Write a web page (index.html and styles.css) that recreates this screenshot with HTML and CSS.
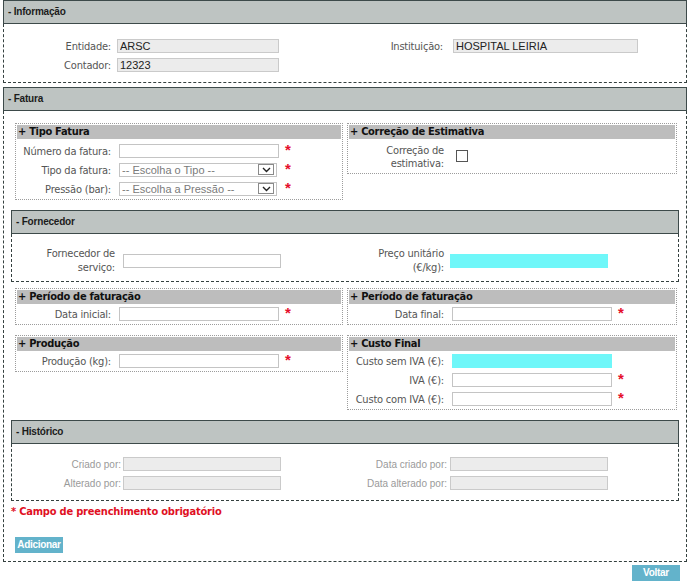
FILE: index.html
```
<!DOCTYPE html>
<html lang="pt">
<head>
<meta charset="utf-8">
<title>Fatura</title>
<link rel="stylesheet" href="styles.css">
</head>
<body>
<div class="page">
  <section class="panel">
    <h2 class="panel-head">- Informação</h2>
    <div class="panel-body info-body">
      <div class="cols">
        <div class="col info-l">
          <div class="row"><label class="lbl">Entidade:</label><input class="txt ro" value="ARSC" readonly></div>
          <div class="row"><label class="lbl">Contador:</label><input class="txt ro" value="12323" readonly></div>
        </div>
        <div class="col info-r">
          <div class="row"><label class="lbl">Instituição:</label><input class="txt ro" value="HOSPITAL LEIRIA" readonly></div>
        </div>
      </div>
    </div>
  </section>

  <section class="panel fatura">
    <h2 class="panel-head">- Fatura</h2>
    <div class="panel-body fatura-body">
      <div class="box-row">
        <div class="sub sub-l">
          <h3 class="sub-head">+ Tipo Fatura</h3>
          <div class="col sub-rows">
            <div class="row"><label class="lbl">Número da fatura:</label><input class="txt"><span class="req">*</span></div>
            <div class="row"><label class="lbl">Tipo da fatura:</label>
              <div class="sel"><select class="sel-in"><option>-- Escolha o Tipo --</option></select><span class="sel-arrow"><svg width="9" height="6" viewBox="0 0 9 6"><polyline points="1,1 4.5,4.5 8,1" fill="none" stroke="#222" stroke-width="1.4"/></svg></span></div><span class="req">*</span></div>
            <div class="row"><label class="lbl">Pressão (bar):</label>
              <div class="sel"><select class="sel-in"><option>-- Escolha a Pressão --</option></select><span class="sel-arrow"><svg width="9" height="6" viewBox="0 0 9 6"><polyline points="1,1 4.5,4.5 8,1" fill="none" stroke="#222" stroke-width="1.4"/></svg></span></div><span class="req">*</span></div>
          </div>
        </div>
        <div class="sub sub-r">
          <h3 class="sub-head">+ Correção de Estimativa</h3>
          <div class="col sub-rows">
            <div class="row row-tall"><label class="lbl lbl-2">Correção de<br>estimativa:</label><input type="checkbox" class="chk"></div>
          </div>
        </div>
      </div>

      <section class="panel inner">
        <h2 class="panel-head">- Fornecedor</h2>
        <div class="panel-body forn-body">
          <div class="cols">
            <div class="col forn-l">
              <div class="row row-2"><label class="lbl lbl-2">Fornecedor de<br>serviço:</label><input class="txt"></div>
            </div>
            <div class="col forn-r">
              <div class="row row-2"><label class="lbl lbl-2">Preço unitário<br>(€/kg):</label><input class="txt cyan"></div>
            </div>
          </div>
        </div>
      </section>

      <div class="box-row per-row">
        <div class="sub sub-l">
          <h3 class="sub-head">+ Período de faturação</h3>
          <div class="col sub-rows">
            <div class="row"><label class="lbl">Data inicial:</label><input class="txt"><span class="req">*</span></div>
          </div>
        </div>
        <div class="sub sub-r">
          <h3 class="sub-head">+ Período de faturação</h3>
          <div class="col sub-rows">
            <div class="row"><label class="lbl">Data final:</label><input class="txt"><span class="req">*</span></div>
          </div>
        </div>
      </div>

      <div class="box-row prod-row">
        <div class="sub sub-l">
          <h3 class="sub-head">+ Produção</h3>
          <div class="col sub-rows">
            <div class="row"><label class="lbl">Produção (kg):</label><input class="txt"><span class="req">*</span></div>
          </div>
        </div>
        <div class="sub sub-r">
          <h3 class="sub-head">+ Custo Final</h3>
          <div class="col sub-rows">
            <div class="row"><label class="lbl">Custo sem IVA (€):</label><input class="txt cyan"></div>
            <div class="row"><label class="lbl">IVA (€):</label><input class="txt"><span class="req">*</span></div>
            <div class="row"><label class="lbl">Custo com IVA (€):</label><input class="txt"><span class="req">*</span></div>
          </div>
        </div>
      </div>

      <section class="panel inner hist">
        <h2 class="panel-head">- Histórico</h2>
        <div class="panel-body hist-body">
          <div class="cols">
            <div class="col hist-l">
              <div class="row"><label class="lbl lbl-muted">Criado por:</label><input class="txt ro" readonly></div>
              <div class="row"><label class="lbl lbl-muted">Alterado por:</label><input class="txt ro" readonly></div>
            </div>
            <div class="col hist-r">
              <div class="row"><label class="lbl lbl-muted">Data criado por:</label><input class="txt ro" readonly></div>
              <div class="row"><label class="lbl lbl-muted">Data alterado por:</label><input class="txt ro" readonly></div>
            </div>
          </div>
        </div>
      </section>

      <p class="req-note">* Campo de preenchimento obrigatório</p>
      <button class="btn">Adicionar</button>
    </div>
  </section>

  <div class="footer"><button class="btn">Voltar</button></div>
</div>
</body>
</html>
```

FILE: styles.css
```
* { box-sizing: border-box; }

body {
  margin: 0;
  background: #fff;
  font-family: "DejaVu Sans Condensed", "DejaVu Sans", sans-serif;
  font-stretch: condensed;
  font-size: 11px;
  color: #555;
}

.page {
  width: 684px;
  margin-left: 3px;
}

.panel { margin: 0; }
.fatura { margin-top: 4px; }

.panel-head {
  margin: 0;
  height: 24px;
  border: 1px solid #3d4a4a;
  background: #bec4c2;
  padding-left: 4px;
  font: bold 10px/22px "Liberation Sans", Arial, sans-serif;
  letter-spacing: -0.2px;
  color: #1c1c1c;
}

.panel-body {
  border: 1px dashed #34403f;
  border-top: 0;
}

.cols { display: flex; }

.col {
  display: flex;
  flex-direction: column;
  row-gap: 1px;
}

.row {
  display: flex;
  align-items: center;
  height: 18px;
}

.lbl {
  flex: none;
  width: var(--lw);
  margin-right: var(--g);
  display: flex;
  justify-content: flex-end;
  text-align: right;
  white-space: nowrap;
  letter-spacing: -0.2px;
  color: #555;
}

.lbl-2 {
  white-space: normal;
  line-height: 13px;
}

.lbl-muted {
  font-family: "Liberation Sans", Arial, sans-serif;
  font-size: 10px;
  letter-spacing: 0;
  color: #9a9a9a;
}

.txt {
  flex: none;
  width: var(--iw);
  height: 14px;
  margin: 0;
  padding: 0 2px;
  border: 1px solid #c4c4c4;
  background: #fff;
  font: 11px/12px "Liberation Sans", Arial, sans-serif;
  color: #222;
  outline: none;
}

.ro {
  background: #ececec;
  border-color: #cacaca;
}

.cyan {
  background: #6ff7f9;
  border-color: #6ff7f9;
}

.req {
  align-self: flex-start;
  margin-left: 6px;
  margin-top: 1px;
  font: bold 15px/14px "Liberation Sans", Arial, sans-serif;
  color: #e5102c;
}

/* Informação */
.info-body { padding: 13px 0 8px; }
.info-l { width: 340px; --lw: 107px; --g: 6px; --iw: 162px; }
.info-r { --lw: 99px; --g: 10px; --iw: 185px; }

/* Fatura */
.fatura-body { padding: 12px 7px 8px; }

.box-row {
  display: grid;
  grid-template-columns: 328px 330px;
  column-gap: 4px;
  align-items: start;
  margin: 0 2px 0 4px;
}

.per-row { margin-top: 6px; }
.prod-row { margin-top: 10px; }

.sub {
  border: 1px dotted #9c9c9c;
  padding: 1px;
}

.sub-head {
  margin: 0;
  height: 14px;
  padding-left: 1px;
  background: #bdbdbd;
  font-weight: bold;
  font-size: 11px;
  line-height: 14px;
  letter-spacing: -0.3px;
  color: #111;
}

.sub-rows { padding-top: 3px; }
.per-row .sub-rows,
.prod-row .sub-rows { padding-top: 1px; }
.sub-l .sub-rows { --lw: 94px; --g: 8px; --iw: 160px; }
.sub-r .sub-rows { --lw: 95px; --g: 8px; --iw: 160px; }

.row-tall { height: 30px; }

.chk {
  appearance: none;
  -webkit-appearance: none;
  width: 12px;
  height: 12px;
  margin: 0 0 2px 4px;
  border: 1px solid #555;
  background: #fff;
}

.sel {
  position: relative;
  flex: none;
  width: 158px;
  height: 14px;
}

.sel-in {
  appearance: none;
  -webkit-appearance: none;
  width: 100%;
  height: 100%;
  margin: 0;
  padding: 0 2px;
  border: 1px solid #c4c4c4;
  border-radius: 0;
  background: #fff;
  font: 11px/12px "Liberation Sans", Arial, sans-serif;
  color: #7a7a7a;
  outline: none;
}

.sel-arrow {
  position: absolute;
  right: 3px;
  top: 1px;
  width: 16px;
  height: 11px;
  border: 1px solid #8a8a8a;
  background: #fff;
  display: flex;
  align-items: center;
  justify-content: center;
}

.sel-arrow svg { display: block; }

.sel + .req { margin-left: 8px; }

/* Fornecedor */
.inner { margin-top: 10px; }
.forn-body { padding: 13px 0 6px; }
.row-2 { height: 28px; }
.forn-l { width: 332px; --lw: 103px; --g: 8px; --iw: 158px; }
.forn-r { --lw: 100px; --g: 6px; --iw: 158px; }
.forn-body .lbl-2 { line-height: 14px; }

/* Histórico */
.hist { margin-top: 10px; }
.hist-body { padding: 11px 0 8px; }
.hist-l { width: 332px; --lw: 109px; --g: 2px; --iw: 158px; }
.hist-r { --lw: 103px; --g: 3px; --iw: 158px; }

.req-note {
  margin: 4px 0 0;
  line-height: 14px;
  font-weight: bold;
  font-size: 11px;
  letter-spacing: -0.2px;
  color: #e0101f;
}

.btn {
  display: block;
  height: 16px;
  width: 48px;
  margin: 18px 0 0 4px;
  padding: 0;
  border: 0;
  background: #63b3cb;
  color: #fff;
  font: bold 10px/16px "Liberation Sans", Arial, sans-serif;
  letter-spacing: -0.3px;
}

.footer {
  display: flex;
  justify-content: flex-end;
  padding-right: 7px;
  margin-top: 3px;
}

.footer .btn { margin: 0; }
```
